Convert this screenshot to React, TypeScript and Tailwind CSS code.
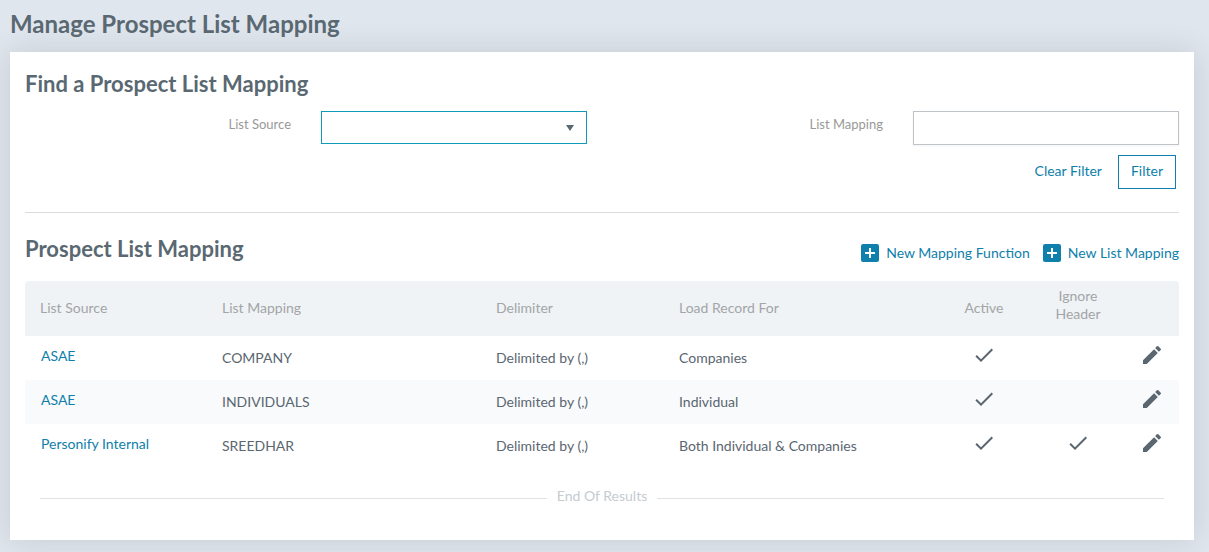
import { MdAddBox, MdCheck, MdEdit } from "react-icons/md";

type Mapping = {
  id: number;
  source: string;
  mapping: string;
  delimiter: string;
  loadFor: string;
  active: boolean;
  ignoreHeader: boolean;
};

const MAPPINGS: Mapping[] = [
  { id: 1, source: "ASAE", mapping: "COMPANY", delimiter: "Delimited by (,)", loadFor: "Companies", active: true, ignoreHeader: false },
  { id: 2, source: "ASAE", mapping: "INDIVIDUALS", delimiter: "Delimited by (,)", loadFor: "Individual", active: true, ignoreHeader: false },
  { id: 3, source: "Personify Internal", mapping: "SREEDHAR", delimiter: "Delimited by (,)", loadFor: "Both Individual & Companies", active: true, ignoreHeader: true },
];

const ACTIONS = ["New Mapping Function", "New List Mapping"];

function Filters() {
  return (
    <form onSubmit={(e) => e.preventDefault()}>
      <div className="-mx-[15px] grid grid-cols-4 pt-[11px]">
        <label htmlFor="source" className="px-[15px] pt-[3px] text-right text-[13px] leading-5 text-[#999]">
          List Source
        </label>
        <div className="relative px-[15px]">
          <select
            id="source"
            className="block h-[33px] w-full appearance-none border border-[#0f9bb8] bg-white px-3 outline-none"
          >
            <option value="" />
            <option>ASAE</option>
            <option>Personify Internal</option>
          </select>
          <svg viewBox="0 0 8 6" className="pointer-events-none absolute top-[14px] right-7 h-[6px] w-2" aria-hidden>
            <path d="M0 0h8L4 6z" fill="#5a6872" />
          </svg>
        </div>
        <label htmlFor="mapping" className="px-[15px] pt-[3px] text-right text-[13px] leading-5 text-[#999]">
          List Mapping
        </label>
        <div className="px-[15px]">
          <input
            id="mapping"
            type="text"
            className="block h-[34px] w-full border border-[#bdc3c7] bg-white px-3 shadow-xs outline-none"
          />
        </div>
      </div>
      <div className="flex items-center justify-end gap-4 border-b border-[#dcdcdc] pt-[10px] pr-[3px] pb-[23px]">
        <button type="reset" className="pb-[2px] text-[#0f80ab]">
          Clear Filter
        </button>
        <button type="submit" className="h-[34px] border border-[#0f80ab] px-3 pb-[2px] text-[#0f80ab]">
          Filter
        </button>
      </div>
    </form>
  );
}

function MappingTable() {
  return (
    <table className="w-full table-fixed text-left">
      <colgroup>
        <col className="w-[182px]" />
        <col className="w-[274px]" />
        <col className="w-[183px]" />
        <col />
        <col className="w-[94px]" />
        <col className="w-[94px]" />
        <col className="w-[54px]" />
      </colgroup>
      <thead>
        <tr className="h-[55px] leading-[18px] text-[#a3a5a6] *:bg-[#eff3f6] *:pb-[2px] *:font-normal">
          <th className="rounded-tl px-[15px]">List Source</th>
          <th className="px-[15px]">List Mapping</th>
          <th className="px-[15px]">Delimiter</th>
          <th className="px-[15px]">Load Record For</th>
          <th className="px-[15px] text-center">Active</th>
          <th className="px-[15px] text-center align-top pt-[6px]">Ignore Header</th>
          <th className="rounded-tr" aria-label="Edit" />
        </tr>
      </thead>
      <tbody>
        {MAPPINGS.map((m) => (
          <tr key={m.id} className="h-11 even:bg-[#f9fafc]">
            <td className="px-4 pb-1">
              <a href="#" className="text-[#0f80ab]">
                {m.source}
              </a>
            </td>
            <td className="px-[15px] pb-px">{m.mapping}</td>
            <td className="px-[15px] pb-px">{m.delimiter}</td>
            <td className="px-[15px] pb-px">{m.loadFor}</td>
            <td className="pb-[6px]">{m.active && <MdCheck className="mx-auto size-6" />}</td>
            <td className="pb-[6px]">{m.ignoreHeader && <MdCheck className="mx-auto size-6" />}</td>
            <td className="pb-[6px]">
              <button type="button" aria-label={`Edit ${m.mapping}`} className="mx-auto block">
                <MdEdit className="size-6" />
              </button>
            </td>
          </tr>
        ))}
      </tbody>
    </table>
  );
}

export default function App() {
  return (
    <div className="min-h-screen overflow-hidden bg-[#e0e6ee] pr-[15px] pb-3 pl-[10px] font-['Lato',sans-serif] text-sm text-[#5a6670]">
      <h1 className="pt-2 pb-3 text-2xl leading-8 font-bold text-[#5a6872]">Manage Prospect List Mapping</h1>
      <main className="bg-white px-[15px] pt-4 pb-[34px] shadow-[0_0_30px_rgba(0,0,0,0.12)]">
        <h2 className="text-[22px] leading-8 font-bold text-[#5a6872]">Find a Prospect List Mapping</h2>
        <Filters />
        <div className="flex items-start justify-between pt-5 pb-4">
          <h2 className="text-[22px] leading-8 font-bold text-[#5a6872]">Prospect List Mapping</h2>
          <div className="flex gap-[10px] pt-2">
            {ACTIONS.map((label) => (
              <a key={label} href="#" className="flex items-center gap-1 text-[#0f80ab]">
                <MdAddBox className="size-6" />
                {label}
              </a>
            ))}
          </div>
        </div>
        <MappingTable />
        <div className="flex items-center gap-[10px] px-[15px] pt-[18px]">
          <span className="mt-1 h-px flex-1 bg-[#e0e2e4]" />
          <span className="leading-5 text-[#c5cbd0]">End Of Results</span>
          <span className="mt-1 h-px flex-1 bg-[#e0e2e4]" />
        </div>
      </main>
    </div>
  );
}
